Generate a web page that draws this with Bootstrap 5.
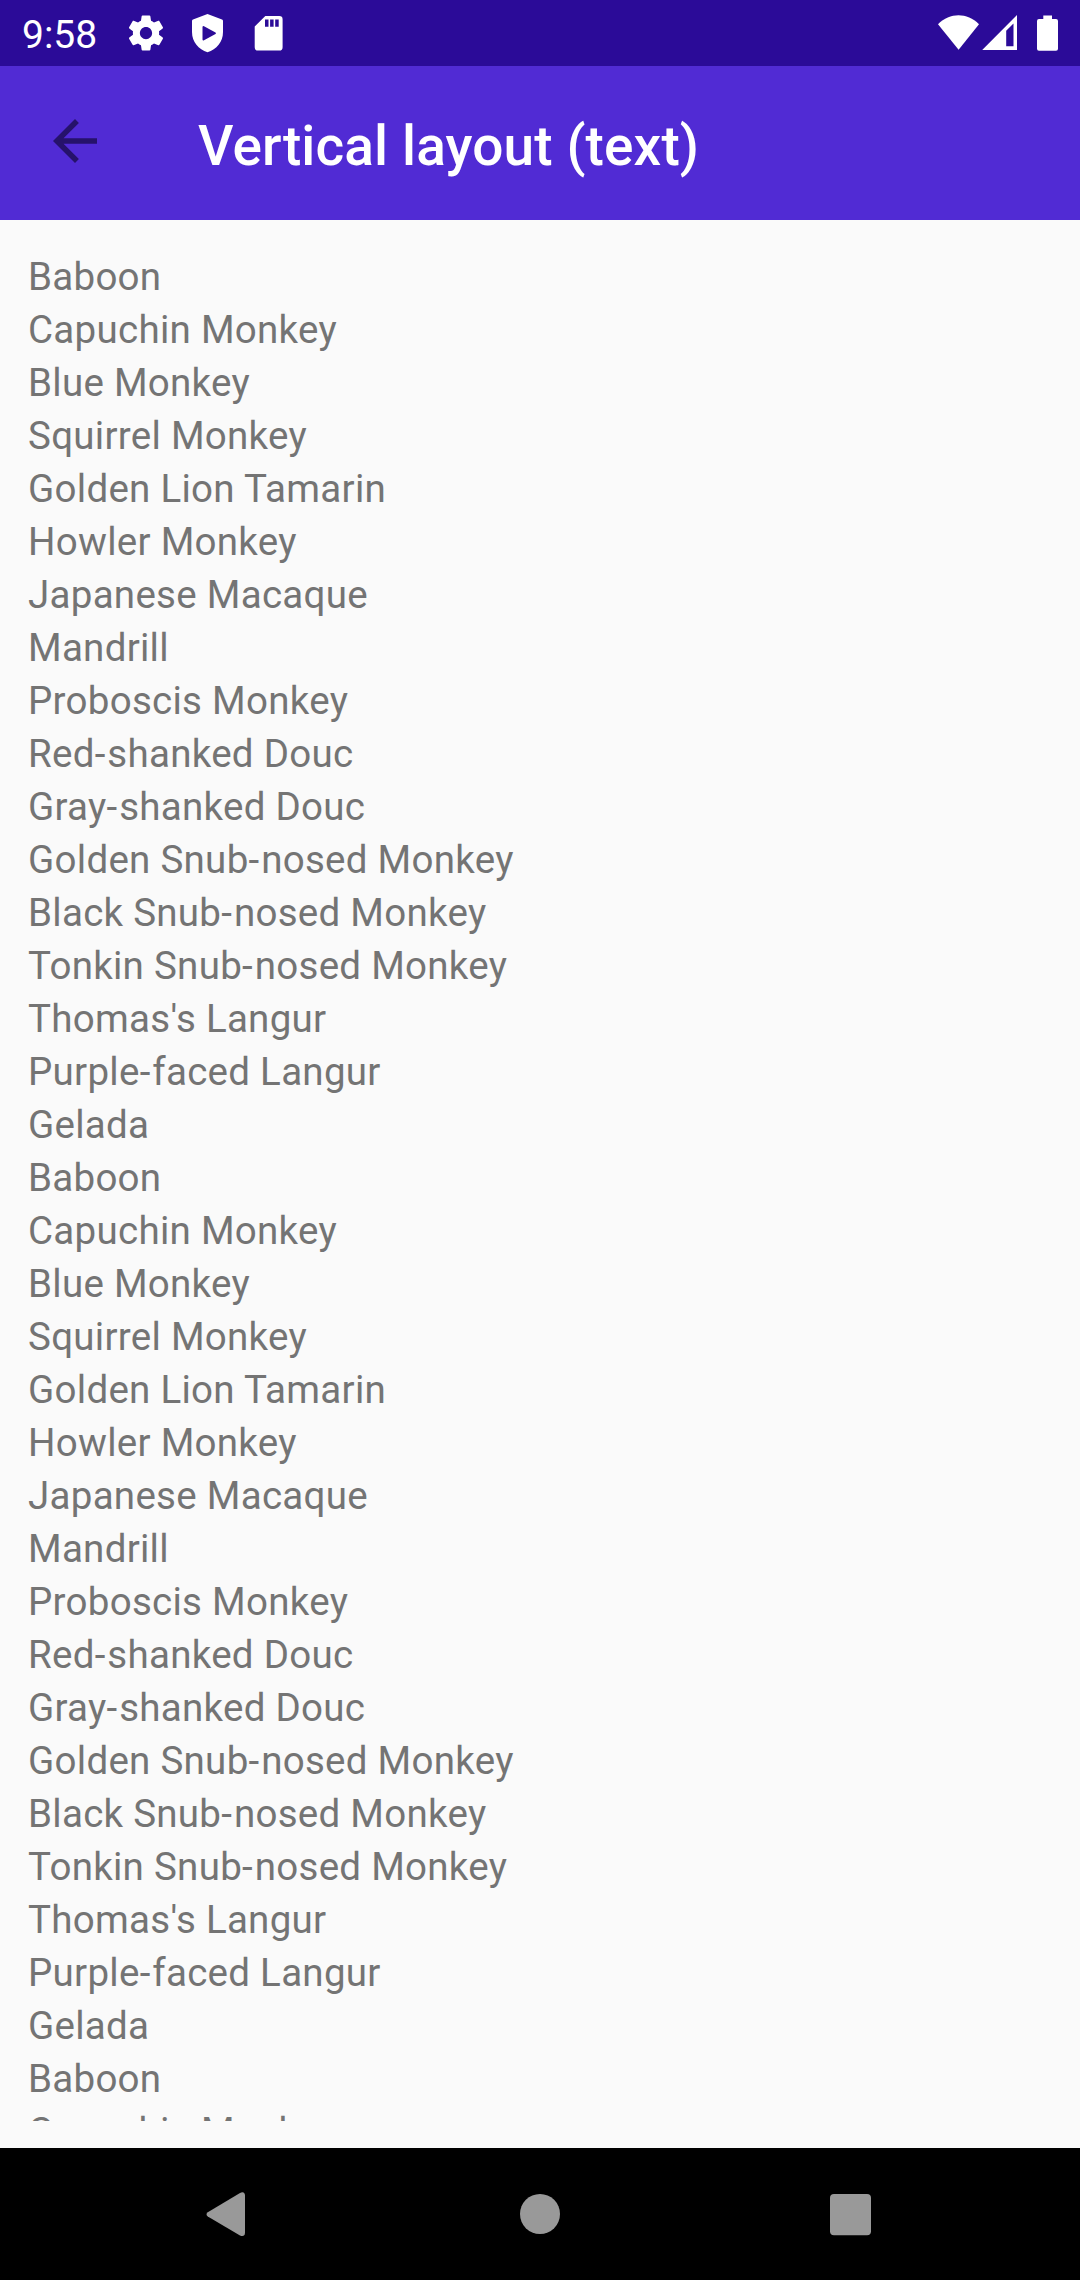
<!DOCTYPE html>
<html lang="en">
<head>
<meta charset="utf-8">
<meta name="viewport" content="width=device-width, initial-scale=1">
<title>Vertical layout (text)</title>
<link href="https://cdn.jsdelivr.net/npm/bootstrap@5.3.0/dist/css/bootstrap.min.css" rel="stylesheet">
<style>
  body { font-family: Roboto, sans-serif; background: #fafafa; height: 2280px; }
  svg { display: block; flex: none; }
  .status-bar { height: 66px; background: #2b0b98; padding: 0 22px; color: #fff; }
  .status-time { font-size: 39px; line-height: 66px; width: 103px; padding-top: 4px; }
  .status-icons { gap: 19.500px; }
  .app-bar { height: 154px; background: #512bd4; padding: 0 42px; --bs-navbar-padding-y: 0; }
  .back-btn { width: 66px; height: 66px; margin-bottom: 4px; color: #26126b; }
  .app-title { font-size: 55px; font-weight: 500; line-height: 64px; letter-spacing: .12px; margin-left: 90px; padding-top: 6px; color: #fff; }
  .page-body { padding: 30px 28px 27px; }
  .monkey-list { font-size: 38.5px; line-height: 53px; min-height: 0; color: #747474; letter-spacing: .28px; }
  .hy { letter-spacing: 2px; }
  .nav-keys { height: 132px; padding: 0 197px; color: #999; }
</style>
</head>
<body class="d-flex flex-column overflow-hidden">

<header class="status-bar d-flex align-items-center justify-content-between flex-shrink-0">
  <div class="d-flex align-items-center">
    <span class="status-time text-nowrap">9:58</span>
    <div class="status-icons d-flex align-items-center">
      <!-- settings -->
      <svg width="42" height="42" viewBox="0 0 24 24" fill="currentColor"><path d="M19.43 12.98c.04-.32.07-.64.07-.98s-.03-.66-.07-.98l2.11-1.65c.19-.15.24-.42.12-.64l-2-3.46c-.12-.22-.39-.3-.61-.22l-2.49 1c-.52-.4-1.08-.73-1.69-.98l-.38-2.65C14.46 2.18 14.25 2 14 2h-4c-.25 0-.46.18-.49.42l-.38 2.65c-.61.25-1.17.59-1.69.98l-2.49-1c-.23-.09-.49 0-.61.22l-2 3.46c-.13.22-.07.49.12.64l2.11 1.65c-.04.32-.07.65-.07.98s.03.66.07.98l-2.11 1.65c-.19.15-.24.42-.12.64l2 3.46c.12.22.39.3.61.22l2.49-1c.52.4 1.08.73 1.69.98l.38 2.65c.03.24.24.42.49.42h4c.25 0 .46-.18.49-.42l.38-2.65c.61-.25 1.17-.59 1.69-.98l2.49 1c.23.09.49 0 .61-.22l2-3.46c.12-.22.07-.49-.12-.64l-2.11-1.65zM12 15.5c-1.93 0-3.5-1.57-3.5-3.5s1.57-3.5 3.5-3.5 3.5 1.57 3.5 3.5-1.57 3.5-3.5 3.5z"/></svg>
      <!-- play protect shield -->
      <svg width="42" height="42" viewBox="0 0 42 42" fill="currentColor"><path fill-rule="evenodd" d="M20.5 2 35 7.6Q36 8 36 9V20C36 30 29.500 37.500 20.500 40.200C11.500 37.500 5 30 5 20V9Q5 8 6 7.600ZM15.500 15V27.500Q15.700 28.800 17 28.200L28.500 22Q29.500 21.200 28.500 20.400L17 14.200Q15.700 13.700 15.500 15Z"/></svg>
      <!-- sd card -->
      <svg width="42" height="42" viewBox="0 0 42 42" fill="currentColor"><path fill-rule="evenodd" d="M17.300 4.100H31.300Q34.600 4.100 34.600 7.400V35.200Q34.600 38.600 31.300 38.600H10Q6.700 38.600 6.700 35.200V14.600ZM17 7.500V14.700H20.500V7.500ZM22.100 7.500V14.700H25.600V7.500ZM27.200 7.500V14.700H30.700V7.500Z"/></svg>
    </div>
  </div>
  <div class="d-flex align-items-center">
    <!-- wifi, mobile signal, battery -->
    <svg width="120" height="42" viewBox="0 0 120 42" fill="currentColor">
      <path d="M0 12.300C12 .4 29 .4 41 12.300L20.600 37.700Z"/>
      <path fill-rule="evenodd" d="M79 3V38H44.200ZM68.200 18.800V34.200H75.500V11.500Z"/>
      <path d="M105.300 3.500H114V7H118Q120 7 120 9V36.700Q120 38.700 118 38.700H101Q99 38.700 99 36.700V9Q99 7 101 7H105.300Z"/>
    </svg>
  </div>
</header>

<nav class="app-bar navbar flex-nowrap justify-content-start flex-shrink-0">
  <a href="#" class="back-btn" aria-label="Back">
    <svg width="66" height="66" viewBox="0 0 24 24" fill="currentColor"><path d="M20 11H7.830l5.590-5.590L12 4l-8 8 8 8 1.410-1.410L7.830 13H20v-2z"/></svg>
  </a>
  <h1 class="app-title mb-0 text-nowrap">Vertical layout (text)</h1>
</nav>

<main class="page-body d-flex flex-column flex-grow-1 overflow-hidden">
  <ul class="monkey-list list-unstyled mb-0 flex-grow-1 overflow-hidden">
    <li>Baboon</li>
    <li>Capuchin Monkey</li>
    <li>Blue Monkey</li>
    <li>Squirrel Monkey</li>
    <li>Golden Lion Tamarin</li>
    <li>Howler Monkey</li>
    <li>Japanese Macaque</li>
    <li>Mandrill</li>
    <li>Proboscis Monkey</li>
    <li>Red<span class="hy">-</span>shanked Douc</li>
    <li>Gray<span class="hy">-</span>shanked Douc</li>
    <li>Golden Snub<span class="hy">-</span>nosed Monkey</li>
    <li>Black Snub<span class="hy">-</span>nosed Monkey</li>
    <li>Tonkin Snub<span class="hy">-</span>nosed Monkey</li>
    <li>Thomas's Langur</li>
    <li>Purple<span class="hy">-</span>faced Langur</li>
    <li>Gelada</li>
    <li>Baboon</li>
    <li>Capuchin Monkey</li>
    <li>Blue Monkey</li>
    <li>Squirrel Monkey</li>
    <li>Golden Lion Tamarin</li>
    <li>Howler Monkey</li>
    <li>Japanese Macaque</li>
    <li>Mandrill</li>
    <li>Proboscis Monkey</li>
    <li>Red<span class="hy">-</span>shanked Douc</li>
    <li>Gray<span class="hy">-</span>shanked Douc</li>
    <li>Golden Snub<span class="hy">-</span>nosed Monkey</li>
    <li>Black Snub<span class="hy">-</span>nosed Monkey</li>
    <li>Tonkin Snub<span class="hy">-</span>nosed Monkey</li>
    <li>Thomas's Langur</li>
    <li>Purple<span class="hy">-</span>faced Langur</li>
    <li>Gelada</li>
    <li>Baboon</li>
    <li>Capuchin Monkey</li>
  </ul>
</main>

<footer class="nav-keys bg-black d-flex align-items-center justify-content-between flex-shrink-0">
  <svg width="66" height="66" viewBox="0 0 66 66" fill="currentColor"><path d="M10.800 31.200 43 11.900Q47.600 10 48 14.500V52Q47.600 56.300 43 54.500L10.800 35.400Q8.200 33.300 10.800 31.200Z"/></svg>
  <svg width="66" height="66" viewBox="0 0 66 66" fill="currentColor"><circle cx="33" cy="33" r="20"/></svg>
  <svg width="66" height="66" viewBox="0 0 66 66" fill="currentColor"><rect x="13" y="13" width="41" height="41.300" rx="4"/></svg>
</footer>

<script src="https://cdn.jsdelivr.net/npm/bootstrap@5.3.0/dist/js/bootstrap.bundle.min.js"></script>
</body>
</html>
